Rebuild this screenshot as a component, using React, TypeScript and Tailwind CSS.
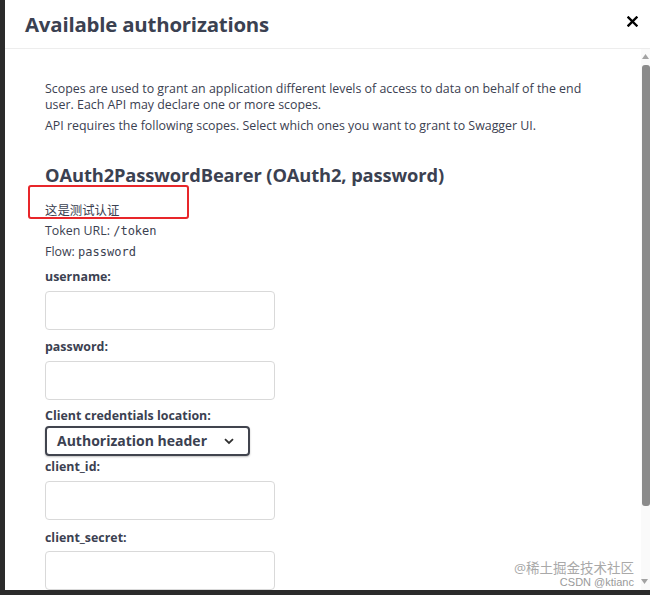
export default function App() {
  const font = { fontFamily: '"Open Sans", "Noto Sans CJK SC", sans-serif' };
  const mono = { fontFamily: '"DejaVu Sans Mono", monospace' };

  return (
    <div className="relative w-[650px] h-[595px] overflow-hidden bg-[#2b2b2b]" style={font}>
      <div className="ml-[5px] w-[645px] h-[590px] bg-white flex flex-col text-[#3b4151]">
        {/* header */}
        <div className="h-[49px] shrink-0 flex items-center justify-between pl-5 pr-[12px] border-b border-[#ededed]">
          <h3 className="text-[20.4px] font-bold leading-none tracking-[-0.2px] mt-[1px]">Available authorizations</h3>
          <svg width="11" height="11" viewBox="0 0 11 11" className="mt-[-5px]">
            <path d="M1.5 1.5 L9.5 9.5 M9.5 1.5 L1.5 9.5" stroke="#000" strokeWidth="2.4" strokeLinecap="square" />
          </svg>
        </div>

        {/* body */}
        <div className="flex-1 flex min-h-0">
          <div className="relative flex-1 pl-10 pr-[40px] pt-[32px] text-[12.4px] leading-4 overflow-hidden">
            <p>
              Scopes are used to grant an application different levels of access to data on behalf of the end user. Each API may declare one or more scopes.
            </p>
            <p className="mt-[5px]">API requires the following scopes. Select which ones you want to grant to Swagger UI.</p>

            <h4 className="mt-[29px] text-[18.3px] font-bold leading-6 tracking-[-0.1px]">OAuth2PasswordBearer (OAuth2, password)</h4>

            <p className="mt-4">这是测试认证</p>
            <p className="mt-1">
              Token URL: <code className="text-[12px]" style={mono}>/token</code>
            </p>
            <p className="mt-[5px]">
              Flow: <code className="text-[12px]" style={mono}>password</code>
            </p>

            <label className="block mt-[9px] font-bold">username:</label>
            <div className="mt-[6px] w-[230px] h-[39px] rounded-[4px] border border-[#d9d9d9]" />

            <label className="block mt-[9px] font-bold">password:</label>
            <div className="mt-[6px] w-[230px] h-[39px] rounded-[4px] border border-[#d9d9d9]" />

            <label className="block mt-[8px] font-bold">Client credentials location:</label>
            <div className="mt-[2px] w-[205px] h-[30px] rounded-[4px] border-2 border-[#41444e] flex items-center justify-between pl-[10px] pr-[14px] shadow-[0_1px_2px_rgba(0,0,0,0.25)]">
              <span className="text-[14px] font-bold">Authorization header</span>
              <svg width="10" height="7" viewBox="0 0 10 7">
                <path d="M1 1.2 L5 5 L9 1.2" fill="none" stroke="#303030" strokeWidth="1.8" />
              </svg>
            </div>

            <label className="block mt-[3px] font-bold">client_id:</label>
            <div className="mt-[6px] w-[230px] h-[39px] rounded-[4px] border border-[#d9d9d9]" />

            <label className="block mt-[10px] font-bold">client_secret:</label>
            <div className="mt-[5px] w-[230px] h-[39px] rounded-[4px] border border-[#d9d9d9]" />

            {/* red annotation box */}
            <div className="absolute left-[23px] top-[136px] w-[161px] h-[34px] rounded-[3px] border-2 border-[#e8262a]" />
          </div>

          {/* scrollbar */}
          <div className="w-[9px] shrink-0 flex flex-col items-center bg-[#fafafa]">
            <svg width="7" height="5" viewBox="0 0 7 5" className="mt-[5px]">
              <path d="M3.5 0 L7 5 L0 5 Z" fill="#a3a3a3" />
            </svg>
            <div className="mt-[6px] w-[8px] h-[441px] rounded-[3px] bg-[#8b8b8b]" />
          </div>
        </div>
      </div>

      {/* watermark */}
      <div className="absolute right-[16px] bottom-[19px] text-[13.5px] leading-4 text-[#a9a9a9]">@稀土掘金技术社区</div>
      <div className="absolute right-[16px] bottom-[7px] text-[11px] leading-3 text-[#9a9a9a]" style={{ fontFamily: '"Liberation Sans", sans-serif' }}>
        CSDN @ktianc
      </div>
      <svg width="7" height="5" viewBox="0 0 7 5" className="absolute right-[2px] bottom-[11px]">
        <path d="M0 0 L7 0 L3.5 5 Z" fill="#a3a3a3" />
      </svg>
    </div>
  );
}
